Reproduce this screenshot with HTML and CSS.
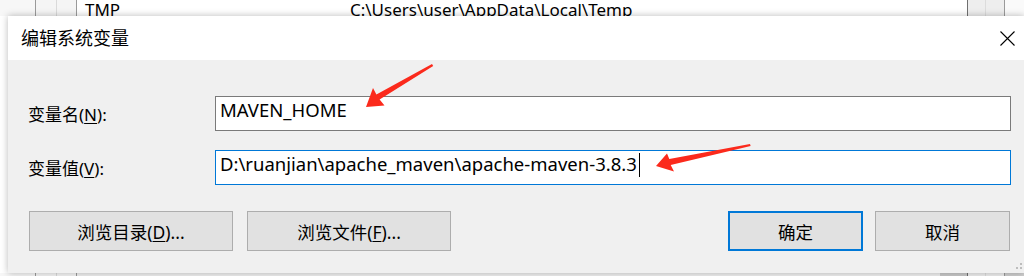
FILE: index.html
```html
<!DOCTYPE html>
<html lang="zh-CN">
<head>
  <meta charset="UTF-8">
  <meta name="viewport" content="width=device-width, initial-scale=1.0">
  <title>编辑系统变量</title>
  <link rel="stylesheet" href="styles.css">
</head>
<body>
  <!-- list behind the dialog -->
  <div class="list-row">
    <span class="cell col-a"></span>
    <span class="cell col-b"></span>
    <span class="cell col-c"></span>
    <span class="cell col-name">TMP</span>
    <span class="cell col-value">C:\Users\user\AppData\Local\Temp</span>
    <span class="cell col-d"></span>
    <span class="cell col-e"></span>
    <span class="cell col-f"></span>
  </div>

  <div class="dialog">
    <div class="titlebar">
      <span class="title">编辑系统变量</span>
      <svg class="close" width="15" height="15" viewBox="0 0 15 15">
        <path d="M0.5 0.5 L14.5 14.5 M14.5 0.5 L0.5 14.5" stroke="#000" stroke-width="1.1" fill="none"/>
      </svg>
    </div>

    <div class="dialog-body">
      <div class="row">
        <label class="label">变量名(<u>N</u>):</label>
        <div class="field">MAVEN_HOME</div>
      </div>
      <div class="row second">
        <label class="label">变量值(<u>V</u>):</label>
        <div class="field focused">D:\ruanjian\apache_maven\apache-maven-3.8.3<span class="caret"></span></div>
      </div>

      <div class="buttons">
        <div class="group">
          <button class="btn wide">浏览目录(<u>D</u>)...</button>
          <button class="btn wide">浏览文件(<u>F</u>)...</button>
        </div>
        <div class="group right">
          <button class="btn default">确定</button>
          <button class="btn">取消</button>
        </div>
      </div>

      <svg class="grip" width="8" height="8" viewBox="0 0 8 8">
        <rect x="5" y="0" width="2" height="2" fill="#bdbdbd"/>
        <rect x="1" y="4" width="2" height="2" fill="#bdbdbd"/>
        <rect x="5" y="4" width="2" height="2" fill="#bdbdbd"/>
      </svg>
    </div>
  </div>

  <div class="list-bottom">
    <span class="cell col-a"></span>
    <span class="cell col-b"></span>
    <span class="cell col-c"></span>
    <span class="cell col-fill"></span>
    <span class="cell col-block"></span>
    <span class="cell col-d"></span>
    <span class="cell col-e"></span>
    <span class="cell col-f dark"></span>
  </div>

  <!-- red annotation arrows -->
  <svg class="arrows" width="1024" height="276" viewBox="0 0 1024 276">
    <polygon points="366,107 373,88 376.4,94.5 432,64 433.2,66 379.6,99.5 384.5,105.5" fill="#fb2a1c"/>
    <polygon points="656,166 667,153.5 669.3,159.1 750,144 750.6,146 670.7,164.9 674,171.5" fill="#fb2a1c"/>
  </svg>
</body>
</html>
```

FILE: styles.css
```css
body {
  margin: 0;
  width: 1024px;
  height: 276px;
  overflow: hidden;
  position: relative;
  background-color: #ffffff;
  font-family: "Noto Sans", "Noto Sans CJK SC", sans-serif;
  color: #000;
}

u {
  text-decoration: underline;
  text-underline-offset: 2px;
}

.list-row,
.list-bottom {
  display: flex;
  overflow: hidden;
}

.list-row {
  height: 16px;
  font-size: 17px;
  line-height: 20px;
  color: #000;
}

.list-bottom {
  height: 3px;
  background-color: #f0f0f0;
}

.cell {
  display: block;
  flex: none;
  box-sizing: border-box;
  white-space: nowrap;
}

.col-a { width: 36px; background-color: #f7f7f7; border-right: 1px solid #9a9a9a; }
.col-b { width: 21px; background-color: #f5f5f5; border-right: 1px solid #dadada; }
.col-c { width: 20px; background-color: #f5f5f5; border-right: 1px solid #9a9a9a; }
.col-name { width: 273px; padding-left: 8px; }
.col-value { width: 617px; }
.col-d { width: 19px; background-color: #eeeeee; border-left: 1px solid #6f6f6f; border-right: 1px solid #dcdcdc; }
.col-e { width: 19px; background-color: #eeeeee; border-right: 1px solid #9a9a9a; }
.col-f { width: 19px; background-color: #fafafa; }
.col-fill { width: 863px; }
.col-block { width: 27px; background-color: #c9c9c9; }
.col-f.dark { background-color: #cfcfcf; }

.dialog {
  margin-left: 8px;
  width: 1016px;
  height: 257px;
  display: flex;
  flex-direction: column;
  box-shadow: 0 0 7px rgba(0, 0, 0, 0.28);
  position: relative;
}

.titlebar {
  height: 44px;
  flex: none;
  background-color: #fff;
  display: flex;
  align-items: center;
  justify-content: space-between;
  padding: 0 9px 0 13px;
}

.title {
  font-size: 18px;
  line-height: 24px;
}

.close {
  display: block;
}

.dialog-body {
  flex: 1;
  background-color: #f0f0f0;
  padding: 36px 13px 0 20px;
  position: relative;
}

.row {
  display: flex;
  align-items: center;
  height: 35px;
}

.row.second {
  margin-top: 19px;
}

.label {
  width: 187px;
  flex: none;
  font-size: 17px;
}

.field {
  flex: 1;
  box-sizing: border-box;
  height: 35px;
  background-color: #fff;
  border: 1px solid #7a7a7a;
  padding-left: 4px;
  font-size: 18.5px;
  line-height: 25px;
  white-space: nowrap;
}

.field.focused {
  border-color: #0078d7;
}

.caret {
  display: inline-block;
  vertical-align: top;
  width: 0;
  height: 24px;
  margin: 2px 0 0 2px;
  border-left: 1px solid #000;
}

.buttons {
  display: flex;
  justify-content: space-between;
  margin-top: 26px;
  padding: 0 1px;
}

.group {
  display: flex;
  gap: 14px;
}

.group.right {
  gap: 12px;
}

.btn {
  box-sizing: border-box;
  width: 135px;
  height: 40px;
  background-color: #e1e1e1;
  border: 1px solid #adadad;
  font-family: "Noto Sans", "Noto Sans CJK SC", sans-serif;
  font-size: 17.5px;
  color: #000;
  padding: 0;
}

.btn.wide {
  width: 204px;
}

.btn.default {
  border: 2px solid #0078d7;
}

.grip {
  position: absolute;
  right: 1px;
  bottom: 2px;
}

.arrows {
  position: absolute;
  top: 0;
  left: 0;
  pointer-events: none;
}
```
